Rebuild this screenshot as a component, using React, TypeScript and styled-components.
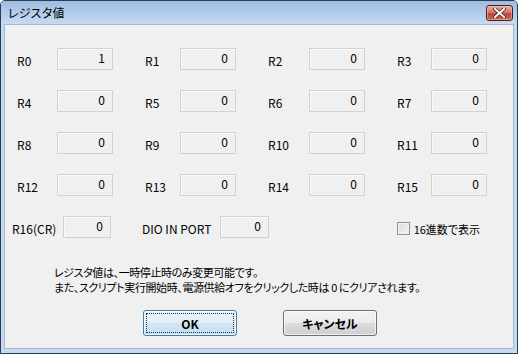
import styled, { createGlobalStyle } from "styled-components";

const GlobalStyle = createGlobalStyle`
  html, body {
    margin: 0;
    padding: 0;
    background: #ffffff;
  }
  body {
    font-family: "Noto Sans CJK JP", "Noto Sans", sans-serif;
    font-feature-settings: "palt" 1;
  }
`;

const Window = styled.div`
  width: 518px;
  height: 354px;
  box-sizing: border-box;
  border: 1px solid #2a3d52;
  border-radius: 5px 5px 0 0;
  background: #c6d9ef;
  display: flex;
  flex-direction: column;
  overflow: hidden;
`;

const TitleBar = styled.div`
  height: 22px;
  display: flex;
  align-items: center;
  justify-content: space-between;
  padding: 0 4px 0 7px;
  background: linear-gradient(180deg, #9dbde2 0%, #b3cceb 55%, #c6d9f0 100%);
`;

const Title = styled.span`
  font-size: 12px;
  color: #000;
  letter-spacing: 0.2px;
`;

const CloseButton = styled.div`
  width: 27px;
  height: 16px;
  margin-top: 1px;
  box-sizing: border-box;
  border: 1px solid #4f1d17;
  border-radius: 3px;
  background: linear-gradient(180deg, #e7a99e 0%, #d7796b 45%, #c2412f 55%, #cf6a55 100%);
  box-shadow: inset 0 0 0 1px rgba(255, 220, 210, 0.45);
  display: flex;
  align-items: center;
  justify-content: center;
`;

const Body = styled.div`
  flex: 1;
  margin: 1px 3px 4px 3px;
  border: 1px solid #a4b9d3;
  background: #f0f0f0;
  padding: 23px 0 0 0;
  display: flex;
  flex-direction: column;
`;

const Rows = styled.div`
  display: flex;
  flex-direction: column;
  gap: 20px;
  padding-left: 7px;
`;

const Row = styled.div`
  display: flex;
  align-items: center;
  gap: 32px;
  padding-left: 5px;
`;

const Reg = styled.div<{ $gap?: number }>`
  display: flex;
  align-items: center;
  margin-left: ${(p) => p.$gap ?? 0}px;
`;

const Label = styled.span<{ $w: number }>`
  width: ${(p) => p.$w}px;
  font-size: 12px;
  color: #000;
  padding-top: 2px;
`;

const Field = styled.div<{ $w?: number }>`
  width: ${(p) => p.$w ?? 56}px;
  height: 22px;
  box-sizing: border-box;
  border: 1px solid #d2d2d2;
  background: #f0f0f0;
  box-shadow: inset 1px 1px 0 #fafafa;
  font-size: 12px;
  text-align: right;
  padding: 2px 7px 0 0;
  line-height: 14px;
  color: #000;
`;

const LastRow = styled.div`
  display: flex;
  align-items: center;
  padding-right: 33px;
`;

const Check = styled.label`
  margin-left: auto;
  display: flex;
  align-items: center;
  gap: 4px;
  font-size: 11px;
  color: #000;
  padding-top: 3px;
`;

const Box = styled.span`
  width: 13px;
  height: 13px;
  box-sizing: border-box;
  border: 1px solid #8e8f8f;
  background: linear-gradient(135deg, #dcdcdc 0%, #f4f4f4 100%);
  box-shadow: inset 0 0 0 1px #f4f4f4;
`;

const Notice = styled.div`
  margin: 27px 0 0 49px;
  font-size: 11px;
  letter-spacing: -0.4px;
  color: #000;
`;

const NoticeLine = styled.div`
  height: 15px;
  line-height: 15px;
`;

const Buttons = styled.div`
  margin-top: 15px;
  display: flex;
  gap: 46px;
  padding-left: 138px;
`;

const Button = styled.button<{ $default?: boolean }>`
  width: 94px;
  height: 26px;
  border-radius: 3px;
  font-family: "Noto Sans CJK JP", "Noto Sans", sans-serif;
  font-feature-settings: "palt" 1;
  font-size: 12px;
  font-weight: 700;
  color: #000;
  padding: 0;
  border: 1px solid ${(p) => (p.$default ? "#3c7fb1" : "#707070")};
  background: ${(p) =>
    p.$default
      ? "linear-gradient(180deg, #eaf3fa 0%, #e2eef8 50%, #d2e5f4 51%, #c6ddf0 100%)"
      : "linear-gradient(180deg, #f3f3f3 0%, #ebebeb 50%, #dddddd 51%, #cfcfcf 100%)"};
  box-shadow: inset 0 0 0 1px rgba(255, 255, 255, 0.7);
  outline: ${(p) => (p.$default ? "1px dotted #333" : "none")};
  outline-offset: -4px;
`;

const rows = [
  [0, 1, 2, 3],
  [4, 5, 6, 7],
  [8, 9, 10, 11],
  [12, 13, 14, 15],
];
const labelWidths = [40, 35, 41, 34];
const values: Record<number, number> = { 0: 1 };

export default function App() {
  return (
    <>
      <GlobalStyle />
      <Window>
        <TitleBar>
          <Title>レジスタ値</Title>
          <CloseButton>
            <svg width="13" height="10" viewBox="0 0 13 10">
              <path
                d="M2 1 L11 9 M11 1 L2 9"
                stroke="#4a2a26"
                strokeWidth="3.6"
                strokeLinecap="square"
              />
              <path
                d="M2 1 L11 9 M11 1 L2 9"
                stroke="#ffffff"
                strokeWidth="2"
                strokeLinecap="square"
              />
            </svg>
          </CloseButton>
        </TitleBar>
        <Body>
          <Rows>
            {rows.map((r, i) => (
              <Row key={i}>
                {r.map((n, j) => (
                  <Reg key={n}>
                    <Label $w={labelWidths[j]}>R{n}</Label>
                    <Field>{values[n] ?? 0}</Field>
                  </Reg>
                ))}
              </Row>
            ))}
            <LastRow>
              <Reg>
                <Label $w={51}>R16(CR)</Label>
                <Field $w={48}>0</Field>
              </Reg>
              <Reg $gap={31}>
                <Label $w={78}>DIO IN PORT</Label>
                <Field $w={49}>0</Field>
              </Reg>
              <Check>
                <Box />
                16進数で表示
              </Check>
            </LastRow>
          </Rows>
          <Notice>
            <NoticeLine>レジスタ値は、一時停止時のみ変更可能です。</NoticeLine>
            <NoticeLine>
              また、スクリプト実行開始時、電源供給オフをクリックした時は 0 にクリアされます。
            </NoticeLine>
          </Notice>
          <Buttons>
            <Button $default>OK</Button>
            <Button>キャンセル</Button>
          </Buttons>
        </Body>
      </Window>
    </>
  );
}
